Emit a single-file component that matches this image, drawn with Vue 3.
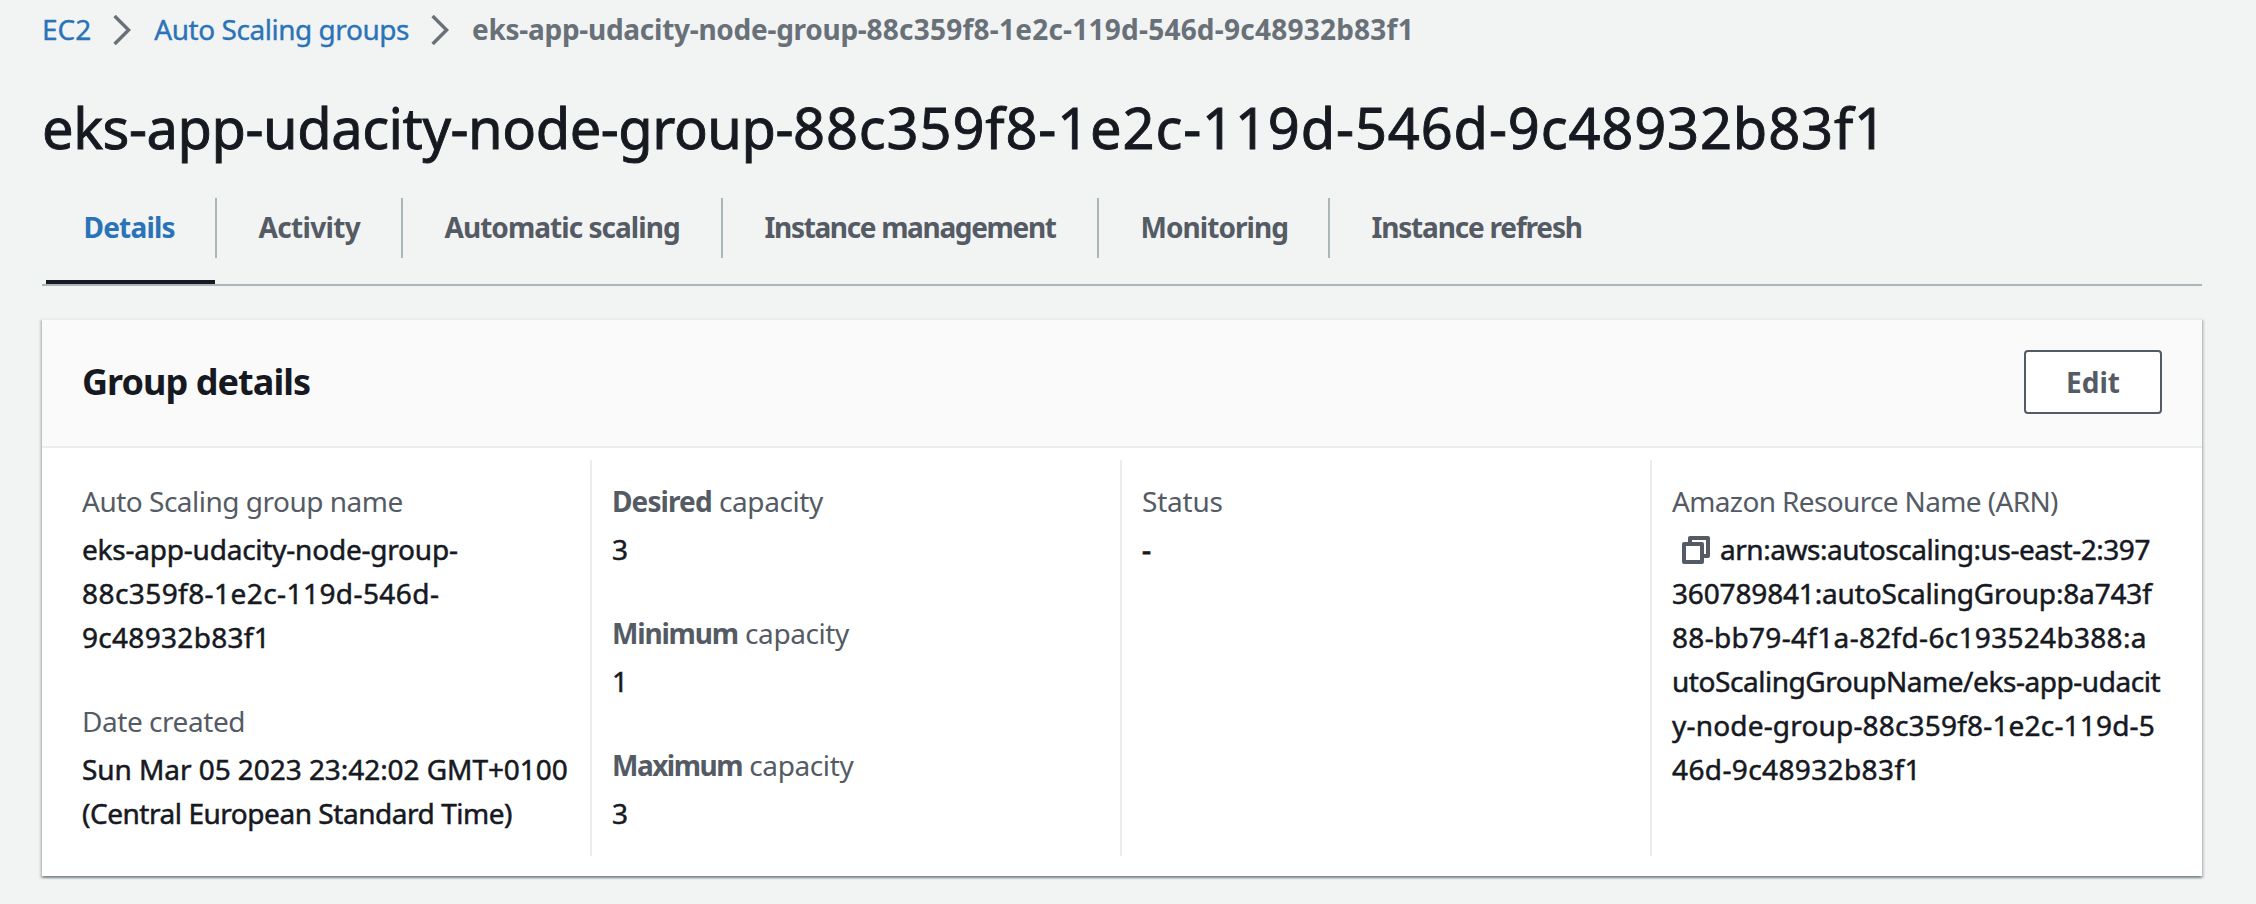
<script setup>
const nameHead = 'eks-app-udacity-node-group-'
const nameId = '88c359f8-1e2c-119d-546d-9c48932b83f1'

const tabs = [
  { label: 'Details', fit: 't-details', active: true },
  { label: 'Activity', fit: 't-activity' },
  { label: 'Automatic scaling', fit: 't-scaling' },
  { label: 'Instance management', fit: 't-management' },
  { label: 'Monitoring', fit: 't-monitoring' },
  { label: 'Instance refresh', fit: 't-refresh' }
]

const capacities = [
  { kind: 'Desired', fit: 'c-desired', value: 3 },
  { kind: 'Minimum', fit: 'c-minimum', value: 1 },
  { kind: 'Maximum', fit: 'c-maximum', value: 3 }
]
</script>

<template>
  <main class="page">
    <nav class="crumbs">
      <a class="link">EC2</a>
      <svg class="chevron" viewBox="0 0 18 30"><path d="M1.6 1 L15.6 15 L1.6 29" /></svg>
      <a class="link l-asg">Auto Scaling groups</a>
      <svg class="chevron" viewBox="0 0 18 30"><path d="M1.6 1 L15.6 15 L1.6 29" /></svg>
      <span class="current"><span class="head">{{ nameHead }}</span><span class="id">{{ nameId }}</span></span>
    </nav>

    <h1 class="title"><span class="head">{{ nameHead }}</span><span class="id">{{ nameId }}</span></h1>

    <div class="tabs">
      <div v-for="t in tabs" :key="t.label" class="tab" :class="{ active: t.active }">
        <span :class="t.fit">{{ t.label }}</span>
      </div>
    </div>

    <section class="card">
      <header class="card-head">
        <h2>Group details</h2>
        <button class="edit">Edit</button>
      </header>
      <div class="columns">
        <div class="col">
          <div class="field">
            <div class="label"><span class="f-name">Auto Scaling group name</span></div>
            <div class="value">
              <div class="n-1">eks-app-udacity-node-group-</div>
              <div class="n-2">88c359f8-1e2c-119d-546d-</div>
              <div class="n-3">9c48932b83f1</div>
            </div>
          </div>
          <div class="field">
            <div class="label"><span class="f-date">Date created</span></div>
            <div class="value">
              <div class="d-1">Sun Mar 05 2023 23:42:02 GMT+0100</div>
              <div class="d-2">(Central European Standard Time)</div>
            </div>
          </div>
        </div>
        <div class="col">
          <div v-for="c in capacities" :key="c.kind" class="field">
            <div class="label"><b :class="c.fit">{{ c.kind }}</b> <span class="f-cap">capacity</span></div>
            <div class="value">{{ c.value }}</div>
          </div>
        </div>
        <div class="col">
          <div class="field">
            <div class="label f-status">Status</div>
            <div class="value dash">-</div>
          </div>
        </div>
        <div class="col">
          <div class="field">
            <div class="label"><span class="f-arn">Amazon Resource Name (ARN)</span></div>
            <div class="value">
              <div class="arn-first">
                <svg class="copy" viewBox="0 0 28 28">
                  <path d="M8 7 V2 H26 V20 H21" />
                  <rect x="2" y="8" width="18" height="18" />
                </svg>
                <span class="a-1">arn:aws:autoscaling:us-east-2:397</span>
              </div>
              <div class="a-2">360789841:autoScalingGroup:8a743f</div>
              <div class="a-3">88-bb79-4f1a-82fd-6c193524b388:a</div>
              <div class="a-4">utoScalingGroupName/eks-app-udacit</div>
              <div class="a-5">y-node-group-88c359f8-1e2c-119d-5</div>
              <div class="a-6">46d-9c48932b83f1</div>
            </div>
          </div>
        </div>
      </div>
    </section>
  </main>
</template>

<style>
body { margin: 0; background: #f2f3f3; }
</style>

<style scoped>
.page {
  box-sizing: border-box;
  width: 2256px;
  height: 904px;
  padding: 7px 54px 0 42px;
  overflow: hidden;
  background: #f2f3f3;
  color: #16191f;
  font-family: "Noto Sans", "Open Sans", sans-serif;
  font-size: 28px;
  line-height: 44px;
  white-space: nowrap;
}

.crumbs { display: flex; align-items: center; height: 44px; }
.link { color: #2a73b8; -webkit-text-stroke: 0.35px #2a73b8; }
.l-asg { letter-spacing: -0.46px; }
.chevron { width: 18px; height: 30px; margin: 2px 23px 0 22px; fill: none; stroke: #687078; stroke-width: 3.4; }
.current { color: #687078; font-weight: 700; }
.current .head { letter-spacing: -0.27px; }
.current .id { letter-spacing: 0.23px; }

.title {
  margin: 40px 0 0;
  font-size: 56px;
  font-weight: 400;
  line-height: 72px;
  -webkit-text-stroke: 0.9px #16191f;
}
.title .head { letter-spacing: -0.45px; }
.title .id { letter-spacing: 0.86px; }

.tabs {
  display: grid;
  grid-template-columns: 175px 186px 320px 376px 231px auto;
  margin-top: 35px;
  padding-bottom: 26px;
  border-bottom: 2px solid #aab7b8;
  color: #545b64;
  font-weight: 700;
}
.tab { position: relative; height: 60px; padding-left: 41.5px; line-height: 59px; border-right: 2px solid #aab7b8; }
.tab:last-child { border-right: 0; }
.active { color: #2a73b8; }
.active::after { content: ""; position: absolute; left: 4px; right: 0; top: 82px; height: 4px; background: #16191f; }
.t-details { letter-spacing: -0.8px; }
.t-activity { letter-spacing: -0.65px; }
.t-scaling { letter-spacing: -0.96px; }
.t-management { letter-spacing: -1.34px; }
.t-monitoring { letter-spacing: -0.95px; }
.t-refresh { letter-spacing: -1.18px; }

.card {
  margin-top: 32px;
  height: 556px;
  border-top: 2px solid #eaeded;
  background: #fff;
  box-shadow: 0 2px 2px 0 rgba(0, 28, 36, 0.3), 2px 2px 2px 0 rgba(0, 28, 36, 0.15), -2px 2px 2px 0 rgba(0, 28, 36, 0.15);
}
.card-head {
  display: flex;
  align-items: center;
  justify-content: space-between;
  height: 126px;
  padding: 0 40px;
  border-bottom: 2px solid #eaeded;
  background: #fafafa;
}
h2 { margin: 0 0 3px; font-size: 36px; line-height: 44px; letter-spacing: -0.95px; }
.edit {
  box-sizing: border-box;
  width: 138px;
  height: 64px;
  margin-bottom: 2px;
  padding: 0;
  border: 2px solid #545b64;
  border-radius: 4px;
  background: #fff;
  color: #545b64;
  font: 700 28px/58px "Noto Sans", sans-serif;
}

.columns { display: grid; grid-template-columns: 548px 530px 530px auto; padding-top: 12px; }
.col { display: flex; flex-direction: column; gap: 40px; box-sizing: border-box; height: 396px; padding: 19px 0 0 20px; border-left: 2px solid #eaeded; }
.col:first-child { padding-left: 40px; border-left: 0; }
.field { display: flex; flex-direction: column; gap: 4px; }
.label { color: #545b64; }
.value { -webkit-text-stroke: 0.5px #16191f; }

.f-name { letter-spacing: -0.5px; }
.n-1 { letter-spacing: -0.22px; }
.n-2 { letter-spacing: 0.43px; }
.n-3 { letter-spacing: 0.3px; }
.f-date { letter-spacing: -0.45px; }
.d-1 { letter-spacing: -0.06px; }
.d-2 { letter-spacing: -0.46px; }
.c-desired { letter-spacing: -0.9px; }
.c-minimum { letter-spacing: -1.2px; }
.c-maximum { letter-spacing: -1.5px; }
.f-cap { letter-spacing: -0.4px; }
.f-status { letter-spacing: -0.2px; }
.dash { -webkit-text-stroke-width: 1px; }
.f-arn { letter-spacing: -0.64px; }
.arn-first { display: flex; align-items: center; height: 44px; }
.copy { width: 28px; height: 28px; margin: 2px 10px 0 10px; fill: none; stroke: #545b64; stroke-width: 4; stroke-linejoin: round; }
.a-1 { letter-spacing: -0.46px; }
.a-2 { letter-spacing: -0.16px; }
.a-3 { letter-spacing: 0.31px; }
.a-4 { letter-spacing: -0.45px; }
.a-5 { letter-spacing: 0.18px; }
.a-6 { letter-spacing: 0.38px; }
</style>
